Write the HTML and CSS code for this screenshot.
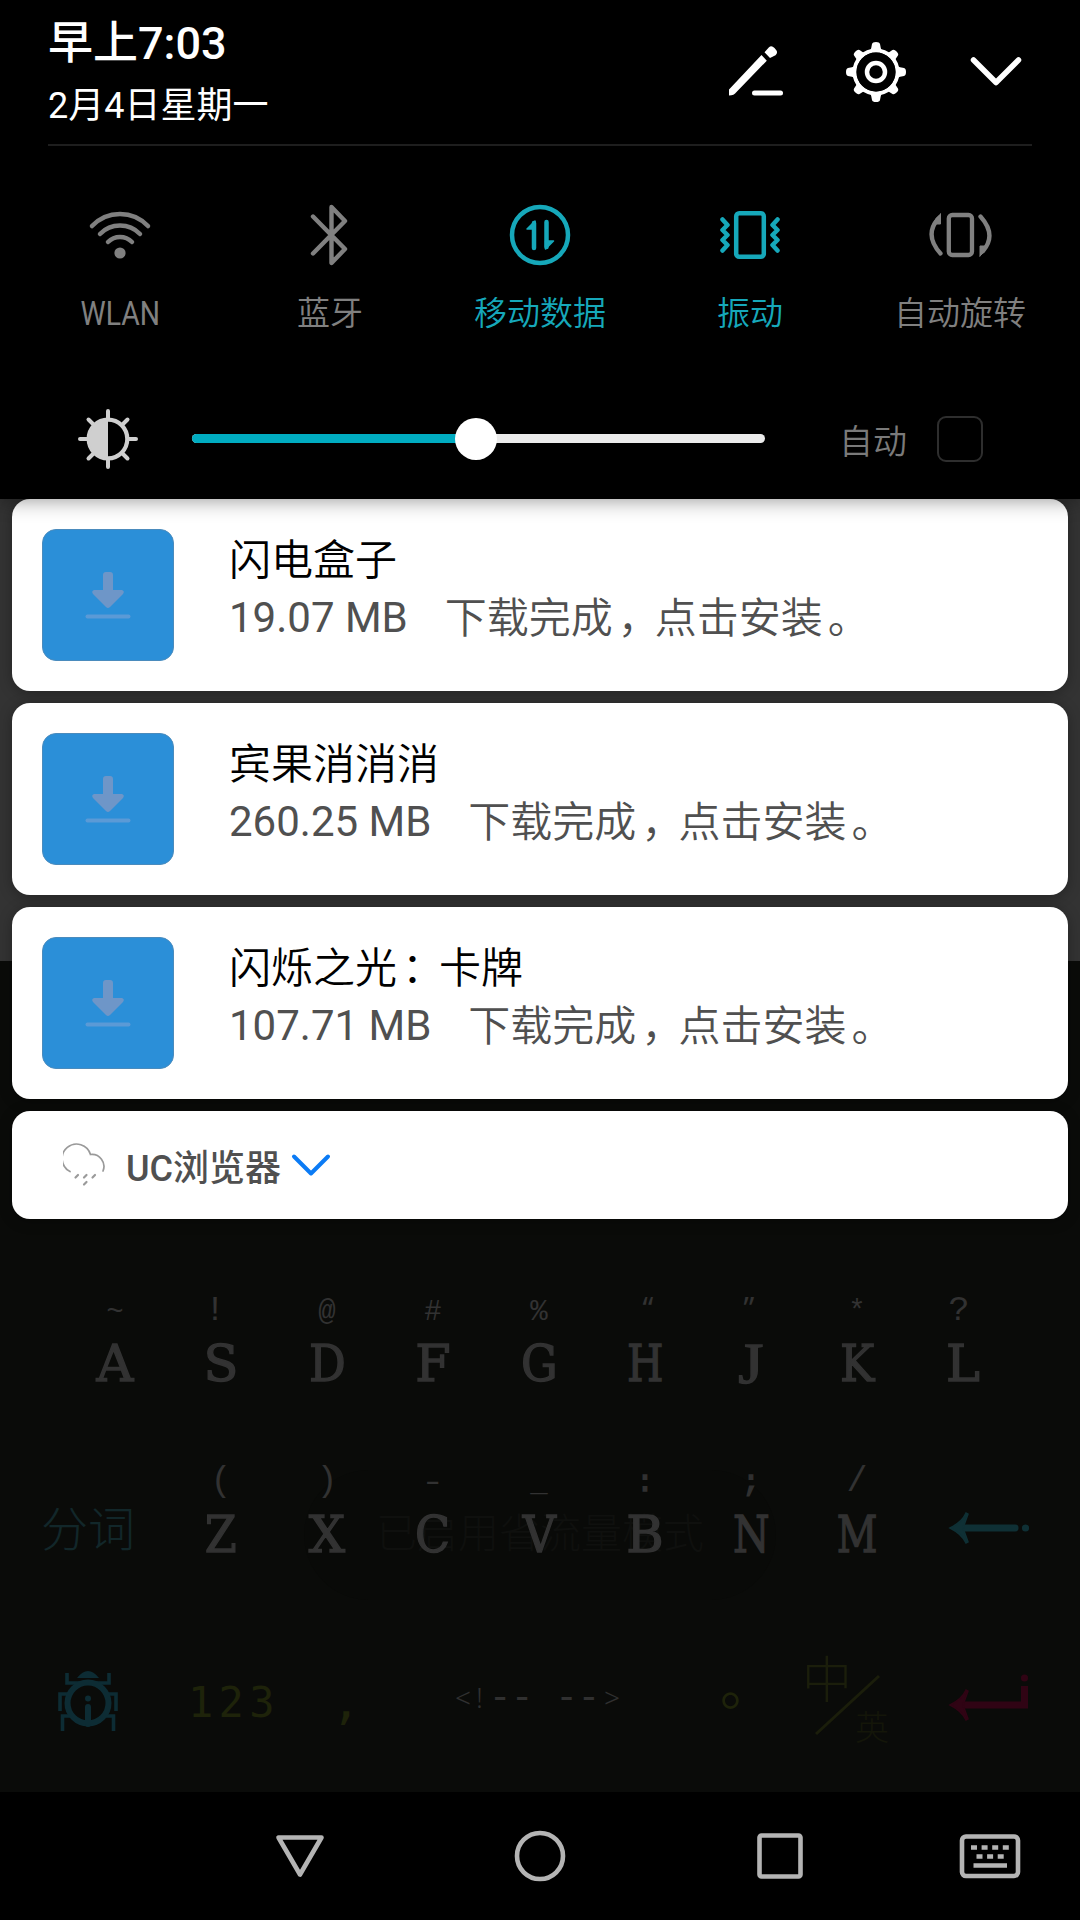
FILE: index.html
```html
<!DOCTYPE html>
<html lang="zh-CN">
<head>
<meta charset="utf-8">
<title>通知中心</title>
<link rel="stylesheet" href="styles.css">
</head>
<body>
<div class="screen">
  <div class="page"></div>
  <div class="keyboard">
    <div class="row row-home">
      <div class="key"><span class="sym">~</span><b>A</b></div>
      <div class="key"><span class="sym tall left">!</span><b>S</b></div>
      <div class="key"><span class="sym">@</span><b class="n90">D</b></div>
      <div class="key"><span class="sym">#</span><b>F</b></div>
      <div class="key"><span class="sym">%</span><b class="n90">G</b></div>
      <div class="key"><span class="sym quote open">“</span><b class="n83">H</b></div>
      <div class="key"><span class="sym quote">”</span><b class="upright">J</b></div>
      <div class="key"><span class="sym">*</span><b class="n90">K</b></div>
      <div class="key"><span class="sym tall right">?</span><b>L</b></div>
    </div>
    <div class="row row-bottom">
      <div class="word">分词</div>
      <div class="key"><span class="sym tall">(</span><b class="n90">Z</b></div>
      <div class="key"><span class="sym tall">)</span><b>X</b></div>
      <div class="key"><span class="sym dash">-</span><b class="n90">C</b></div>
      <div class="key"><span class="sym">_</span><b class="n90">V</b></div>
      <div class="key"><span class="sym dots">:</span><b>B</b></div>
      <div class="key"><span class="sym dots">;</span><b class="n83">N</b></div>
      <div class="key"><span class="sym tall">/</span><b class="n80">M</b></div>
      <div class="cell">
        <svg width="82" height="34" viewBox="0 0 82 34" fill="none" stroke="#0f3035" stroke-width="7" stroke-linecap="round"><path d="M12 17H67"/><circle cx="77.500" cy="17" r="3.6" fill="#0f3035" stroke="none"/><path d="M18 2Q14 11 2 17Q14 23 18 32L20 31L15 17L20 3Z" fill="#0f3035" stroke-width="1.5"/></svg>
      </div>
    </div>
    <div class="row row-space">
      <div class="cell">
        <svg width="62" height="62" viewBox="0 0 62 62" fill="none" stroke="#0d2c34" stroke-width="3.6"><path d="M10 3V13H52V3M15 24H3V41M47 24H59V41M13 46H5.500V61M49 46H56.500V61"/><circle cx="31" cy="33" r="20.500" stroke-width="6"/><path d="M20 8Q31-6 42 8Z" fill="#0d2c34" stroke="none"/><circle cx="31" cy="28.500" r="3" fill="#0d2c34" stroke="none"/><path d="M31 37V54" stroke-width="6" stroke-linecap="round"/></svg>
      </div>
      <div class="digits">123</div>
      <div class="comma">,</div>
      <div class="space"><i class="lt">&lt;!</i>-- --<i class="gt">&gt;</i></div>
      <div class="stop">。</div>
      <div class="lang">
        <span class="zh">中</span><span class="en">英</span>
        <svg width="66" height="62" viewBox="0 0 66 62" stroke="#1b1e0b" stroke-width="3"><path d="M1 60L64 2"/></svg>
      </div>
      <div class="cell">
        <svg width="82" height="50" viewBox="0 0 82 50" fill="none" stroke="#300414" stroke-width="7"><path d="M12 33H76.500V14"/><circle cx="76.500" cy="6" r="3.600" fill="#300414" stroke="none"/><path d="M18 18Q14 27 2 33Q14 39 18 48L20 47L15 33L20 19Z" fill="#300414" stroke-width="1.500"/></svg>
      </div>
    </div>
    <div class="toast">已启用省流量模式</div>
  </div>

  <div class="navbar">
    <svg width="60" height="60" viewBox="0 0 60 60"><path d="M8.500 11.500H51.500L30 48.500Z"/></svg>
    <svg width="60" height="60" viewBox="0 0 60 60"><circle cx="30" cy="30" r="23"/></svg>
    <svg width="60" height="60" viewBox="0 0 60 60"><rect x="9.500" y="9.500" width="41" height="41" rx="2"/></svg>
    <svg width="64" height="60" viewBox="0 0 64 60"><rect x="4" y="10.500" width="56" height="39.500" rx="4"/><path d="M13 21.500H51.500" stroke-dasharray="6 4.600" stroke-width="4.600"/><path d="M18.500 30.500H46" stroke-dasharray="6 4.600" stroke-width="4.600"/><path d="M15.500 39.500H49" stroke-width="4.600"/></svg>
  </div>

  <div class="shade">
    <div class="controls">
      <div class="header">
        <div>
          <div class="time">早上7:03</div>
          <div class="date">2月4日星期一</div>
        </div>
        <div class="actions">
          <svg width="60" height="60" viewBox="0 0 60 60" fill="#fff"><path d="M3 48.500L35.500 14L40.800 19.700L10.500 51Q8 54.500 3 54.500ZM38.500 11.200L43 6.200Q45.500 4 48.500 7L50.500 9.500Q52 12 49.500 14.300L44 17Z"/><rect x="26" y="49.500" width="31" height="5" rx="2.500"/></svg>
          <svg width="62" height="62" viewBox="-31 -31 62 62" fill="#fff">
            <g id="teeth"><path id="tooth" d="M-6-20.500Q-4.500-24-4-28Q-3.500-30 0-30Q3.500-30 4-28Q4.500-24 6-20.500Z"/><use href="#tooth" transform="rotate(90)"/><use href="#tooth" transform="rotate(180)"/><use href="#tooth" transform="rotate(270)"/></g>
            <use href="#teeth" transform="rotate(45) scale(.97)"/>
            <circle r="21.500" fill="none" stroke="#fff" stroke-width="4"/><circle r="19.500" fill="#000"/>
            <circle r="9" fill="none" stroke="#fff" stroke-width="4.500"/>
          </svg>
          <svg width="60" height="60" viewBox="0 0 60 60" fill="none" stroke="#fff" stroke-width="5.500" stroke-linecap="round" stroke-linejoin="round"><path d="M7.500 19L30 41.500L52.500 19"/></svg>
        </div>
      </div>

      <div class="tiles">
        <div class="tile">
          <svg width="64" height="64" viewBox="-32 -32 64 64" fill="none" stroke="currentColor" stroke-width="4.500" stroke-linecap="round"><path d="M-28-9A38.500 38.500 0 0 1 28-9M-20-1A28 28 0 0 1 20-1M-12 7A17 17 0 0 1 12 7"/><circle cy="18" r="5.600" fill="currentColor" stroke="none"/></svg>
          <span class="latin">WLAN</span>
        </div>
        <div class="tile">
          <svg width="64" height="64" viewBox="-32 -32 64 64" fill="none" stroke="currentColor" stroke-width="4.400" stroke-linecap="round" stroke-linejoin="round"><path d="M-17-18.500L15 14L1.500 28V-28L15-14L-17 18.500"/></svg>
          <span>蓝牙</span>
        </div>
        <div class="tile on">
          <svg width="64" height="64" viewBox="-32 -32 64 64" fill="none" stroke="currentColor" stroke-width="4.500" stroke-linecap="round" stroke-linejoin="round"><circle r="28"/><path d="M-6 13V-12M6.500-13V12"/><path d="M-5-14V-6H-13ZM5.500 14V6H13.500Z" fill="currentColor" stroke-width="1.500"/></svg>
          <span>移动数据</span>
        </div>
        <div class="tile on">
          <svg width="64" height="64" viewBox="-32 -32 64 64" fill="none" stroke="currentColor" stroke-width="4.500" stroke-linecap="round" stroke-linejoin="round"><rect x="-13.800" y="-21.800" width="27.600" height="43.600" rx="3"/><path d="M-27.500-15.500L-22.500-10L-27.500-5L-22.500 0L-27.500 5L-22.500 10L-27.500 15.500M27.500-15.500L22.500-10L27.500-5L22.500 0L27.500 5L22.500 10L27.500 15.500"/></svg>
          <span>振动</span>
        </div>
        <div class="tile">
          <svg width="64" height="64" viewBox="-32 -32 64 64" fill="none" stroke="currentColor" stroke-width="4.300" stroke-linecap="round" stroke-linejoin="round"><rect x="-11.200" y="-20" width="23.200" height="40" rx="3.500"/><path d="M-19.500 18.500Q-36 0-22-16M20.500-18.500Q37 0 23 16"/><path d="M-19.500-21V-11H-27Q-24-18-19.500-21ZM20 21V11H27.500Q24.500 18 20 21Z" fill="currentColor" stroke-width="1"/></svg>
          <span>自动旋转</span>
        </div>
      </div>

      <div class="brightness">
        <svg width="62" height="62" viewBox="-31 -31 62 62" fill="none" stroke="#cfcfcf" stroke-width="4" stroke-linecap="round"><circle r="19.300" stroke-width="4.200"/><path d="M0-19A19 19 0 0 0 0 19Z" fill="#cfcfcf" stroke="none"/><path d="M0-28V-21M0 28V21M-28 0H-21M28 0H21M-19.500-19.500L-15-15M19.500 19.500L15 15M-19.500 19.500L-15 15M19.500-19.500L15-15"/></svg>
        <div class="slider"><div class="fill"></div><div class="thumb"></div></div>
        <span class="auto">自动</span>
        <span class="checkbox"></span>
      </div>
    </div>

    <div class="cards">
      <div class="card">
        <div class="app-icon"><svg width="48" height="50" viewBox="0 0 48 50"><path d="M19 5Q19 2 22 2H26Q29 2 29 5V20H38Q41 21 39 24L26 37Q24 39 22 37L9 24Q7 21 10 20H19Z" fill="#6e96c8"/><path d="M3.500 46.500H44.500" stroke="#5b9ad6" stroke-width="4" stroke-linecap="round"/></svg></div>
        <div><div class="title">闪电盒子</div><div class="info"><span class="size">19.07 MB</span><span class="state">下载完成<span class="punct">，</span>点击安装<span class="punct">。</span></span></div></div>
      </div>
      <div class="card">
        <div class="app-icon"><svg width="48" height="50" viewBox="0 0 48 50"><path d="M19 5Q19 2 22 2H26Q29 2 29 5V20H38Q41 21 39 24L26 37Q24 39 22 37L9 24Q7 21 10 20H19Z" fill="#6e96c8"/><path d="M3.500 46.500H44.500" stroke="#5b9ad6" stroke-width="4" stroke-linecap="round"/></svg></div>
        <div><div class="title">宾果消消消</div><div class="info"><span class="size">260.25 MB</span><span class="state">下载完成<span class="punct">，</span>点击安装<span class="punct">。</span></span></div></div>
      </div>
      <div class="card">
        <div class="app-icon"><svg width="48" height="50" viewBox="0 0 48 50"><path d="M19 5Q19 2 22 2H26Q29 2 29 5V20H38Q41 21 39 24L26 37Q24 39 22 37L9 24Q7 21 10 20H19Z" fill="#6e96c8"/><path d="M3.500 46.500H44.500" stroke="#5b9ad6" stroke-width="4" stroke-linecap="round"/></svg></div>
        <div><div class="title">闪烁之光<span class="punct">：</span>卡牌</div><div class="info"><span class="size">107.71 MB</span><span class="state">下载完成<span class="punct">，</span>点击安装<span class="punct">。</span></span></div></div>
      </div>
      <div class="card group">
        <svg width="44" height="44" viewBox="0 0 44 44" fill="none" stroke="#9a9a9a" stroke-width="1.700" stroke-linecap="round"><path d="M7 28.500A14.500 14.500 0 1 1 27.500 11.500A12 12 0 0 1 40 28"/><path d="M15 32L12.500 34.500M23.500 32L21 34.500M32 32L29.500 34.500M23.500 39L21 41.500" stroke-width="2.200"/></svg>
        <span class="group-name">UC浏览器</span>
        <svg width="40" height="26" viewBox="0 0 40 26" fill="none" stroke="#0b7bf5" stroke-width="4" stroke-linecap="round" stroke-linejoin="round"><path d="M3 4.500L20 21.500L37 4.500"/></svg>
      </div>
    </div>
  </div>
</div>
</body>
</html>
```
FILE: styles.css
```css
* { box-sizing: border-box; }
body {
  margin: 0;
  background: #000;
  font-family: Roboto, "Noto Sans CJK SC", sans-serif;
}
svg { display: block; flex: none; }
.screen {
  position: relative;
  width: 1080px;
  height: 1920px;
  overflow: hidden;
  display: flex;
  flex-direction: column;
}
.page { height: 961px; background: #333; }

/* dimmed keyboard */
.keyboard {
  position: relative;
  height: 831px;
  padding-top: 328px;
  background: #0a0b09;
}
.row { display: grid; position: relative; z-index: 1; }
.row-home { grid-template-columns: repeat(9, 106px); padding-left: 62px; height: 171px; }
.row-bottom { grid-template-columns: 168px repeat(7, 106px) 158px; height: 190px; }
.row-space {
  grid-template-columns: 176px 112px 116px 270px 114px 120px 162px;
  height: 102px;
  align-items: center;
}
.key { display: flex; flex-direction: column; align-items: center; color: #323232; }
.key b {
  font: 400 51px/60px "DejaVu Serif", serif;
  height: 60px;
  -webkit-text-stroke: 1.4px #323232;
}
.key b.n90 { transform: scaleX(.9); }
.key b.n83 { transform: scaleX(.82); }
.key b.n80 { transform: scaleX(.78); }
.key b.upright {
  font-family: "Liberation Serif", serif;
  font-size: 56px;
  transform: scaleX(1.15);
}
.sym { height: 45px; font: 29px/47px "Liberation Mono", monospace; color: #323232; }
.sym.tall { font-size: 35px; line-height: 45px; }
.sym.left { padding-right: 12px; }
.sym.right { padding-right: 8px; }
.sym.quote { font: 30px/38px "Noto Sans", sans-serif; padding-right: 4px; }
.sym.open { padding: 0 0 0 6px; }
.sym.dash { transform: scaleX(1.4); }
.sym.dots { -webkit-text-stroke: 1.5px #303030; }
.word {
  font: 300 47px/60px "Noto Sans CJK SC", sans-serif;
  color: #12272a;
  padding: 36px 0 0 41px;
}
.row-bottom .cell { padding-top: 51px; height: 102px; }
.cell { display: flex; justify-content: center; }
.row-space .cell:last-child { padding-bottom: 9px; }
.digits {
  font: 42px/50px "DejaVu Sans Mono", monospace;
  letter-spacing: 5.3px;
  color: #1e230a;
  padding: 4px 0 0 12px;
}
.comma { font: 48px/50px "DejaVu Sans Mono", monospace; color: #1e230a; text-align: center; }
.space {
  font: 37px/50px "Liberation Mono", monospace;
  color: #303030;
  padding: 0 0 8px 51px;
  white-space: nowrap;
}
.space i { font: 300 28px/50px "Noto Sans", sans-serif; }
.lt { letter-spacing: 5px; padding-right: 1px; }
.gt { padding-left: 4px; }
.stop {
  font: 400 54px/50px "Noto Sans CJK SC", sans-serif;
  color: #1e230a;
  padding: 0 0 36px 46px;
}
.lang {
  display: grid;
  grid-template-columns: 50px 40px;
  padding: 0 0 0 14px;
  color: #1b1e0b;
  font-family: "Noto Sans CJK SC", sans-serif;
  font-weight: 200;
  height: 102px;
}
.zh { font-size: 50px; line-height: 52px; }
.en { font-size: 34px; line-height: 152px; padding-left: 3px; color: #141609; }
.lang svg { position: absolute; left: 815px; top: 24px; }
.toast {
  position: absolute;
  left: 304px;
  top: 509px;
  width: 472px;
  height: 130px;
  border-radius: 65px;
  background: #090a08;
  color: #0f100e;
  font: 300 41px/120px "Noto Sans CJK SC", sans-serif;
  text-align: center;
}

.navbar {
  height: 128px;
  background: #000;
  display: grid;
  grid-template-columns: 240px 240px 240px 180px;
  padding-left: 180px;
  align-items: center;
  justify-items: center;
}
.navbar svg { fill: none; stroke: #b4b4b4; stroke-width: 4.6; stroke-linejoin: round; }

/* pulled-down shade */
.shade { position: absolute; left: 0; top: 0; width: 1080px; z-index: 2; }
.controls {
  position: relative;
  z-index: 1;
  height: 499px;
  background: #000;
  box-shadow: 0 0 20px rgba(0, 0, 0, .45);
}
.header {
  height: 146px;
  margin: 0 48px;
  border-bottom: 2px solid #1e1e1e;
  display: flex;
  justify-content: space-between;
  color: #fff;
}
.time { font-size: 45px; font-weight: 500; line-height: 54px; padding-top: 17px; }
.date { font-size: 36px; line-height: 44px; padding-top: 13px; }
.actions { display: flex; gap: 59px; padding: 41px 6px 0 0; }
.tiles { display: grid; grid-template-columns: repeat(5, 210px); padding: 57px 15px 0; height: 233px; }
.tile {
  display: flex;
  flex-direction: column;
  align-items: center;
  gap: 25px;
  color: #808080;
  font-size: 33px;
  line-height: 44px;
  font-weight: 350;
}
.tile.on { color: #16a8ba; }
.latin { font-weight: 400; transform: scaleX(.86); }
.brightness { display: flex; align-items: center; height: 120px; padding-left: 77px; }
.slider {
  position: relative;
  width: 573px;
  height: 9px;
  margin: 0 0 2px 53px;
  border-radius: 5px;
  background: #ebebeb;
}
.fill { width: 284px; height: 9px; border-radius: 5px; background: #00acc1; }
.thumb {
  position: absolute;
  left: 263px;
  top: -15.5px;
  width: 42px;
  height: 42px;
  border-radius: 50%;
  background: #fff;
}
.auto { width: 98px; margin-left: 74px; font-size: 34px; font-weight: 350; color: #7a7a7a; }
.checkbox { width: 46px; height: 46px; border: 2px solid #2e2e2e; border-radius: 9px; }

.cards { display: flex; flex-direction: column; gap: 12px; padding: 0 12px; }
.card {
  height: 192px;
  background: #fff;
  border-radius: 18px;
  box-shadow: 0 2px 14px rgba(0, 0, 0, .3);
  display: flex;
  padding: 30px;
}
.app-icon {
  width: 132px;
  height: 132px;
  margin-right: 55px;
  border: 1px solid #4a8bbd;
  border-radius: 14px;
  background: #2b8fd8;
  display: flex;
  align-items: center;
  justify-content: center;
}
.title { font-size: 42px; line-height: 56px; color: #000; font-weight: 350; padding-top: 4px; }
.info { display: flex; gap: 37px; font-size: 42px; line-height: 58px; color: #505050; font-weight: 350; }
.size { font-weight: 400; }
.state { padding-top: 1px; }
.punct { margin-left: 5px; letter-spacing: -5px; }
.card.group { height: 108px; align-items: center; padding: 0 51px; }
.group-name { font-size: 36px; font-weight: 500; color: #505050; margin: 0 10px 1px 19px; }
```
